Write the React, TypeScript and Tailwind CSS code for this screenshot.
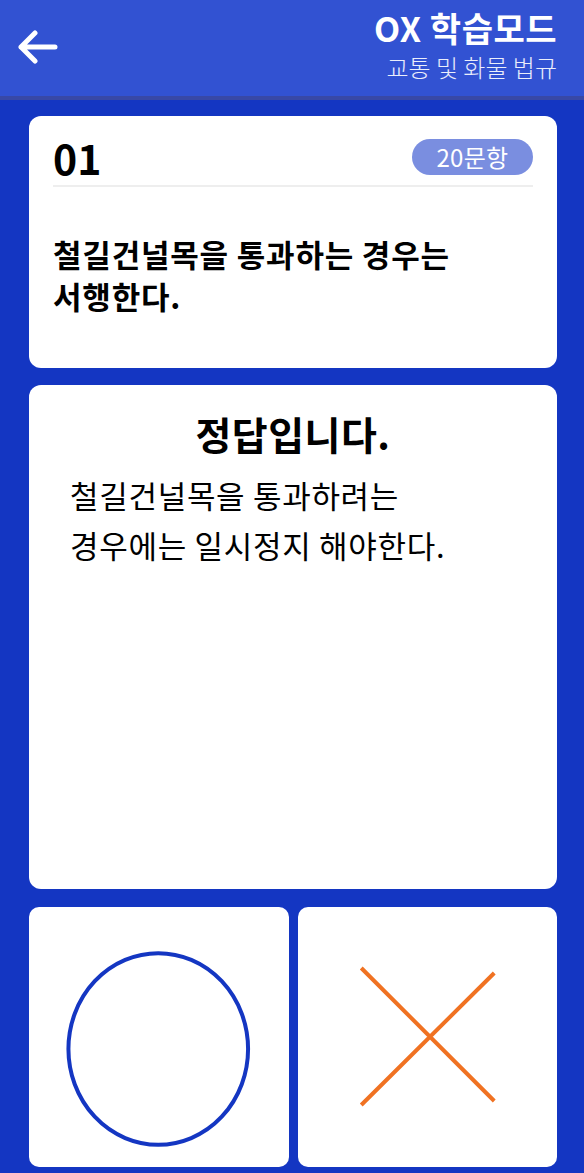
const font = { fontFamily: '"Noto Sans CJK KR", "Noto Sans", sans-serif' };

const BackArrow = () => (
  <svg width="40" height="34" viewBox="0 0 40 34" fill="none">
    <path
      d="M3 17 H37 M17 3 L3 17 L17 31"
      stroke="white"
      strokeWidth="5"
      strokeLinecap="round"
      strokeLinejoin="round"
    />
  </svg>
);

const Header = () => (
  <header className="h-[100px] bg-[#3252d2] border-b-[4px] border-[#3848a6] flex items-start justify-between pl-[18px] pr-[27px]">
    <div className="mt-[30px]">
      <BackArrow />
    </div>
    <div className="flex flex-col items-end pt-[10px] gap-[8px]">
      <h1 className="text-[34px] font-bold text-white leading-[36px] tracking-[0.5px]">OX 학습모드</h1>
      <p className="text-[24px] font-light text-white/90 leading-[26px]">교통 및 화물 법규</p>
    </div>
  </header>
);

const QuestionCard = () => (
  <section className="bg-white rounded-[12px] h-[252px] px-[24px] pt-[23px]">
    <div className="flex items-center justify-between h-[36px]">
      <span className="text-[41px] font-bold text-black leading-none">01</span>
      <span className="w-[121px] h-[36px] rounded-full bg-[#7a8ee0] text-white text-[24px] tracking-[0.3px] flex items-center justify-center">
        20문항
      </span>
    </div>
    <div className="h-[2px] bg-[#eeeeee] mt-[10px]" />
    <p className="mt-[46px] text-[31px] font-bold text-black leading-[42px] tracking-[0.8px]">
      철길건널목을 통과하는 경우는
      <br />
      서행한다.
    </p>
  </section>
);

const AnswerCard = () => (
  <section className="bg-white rounded-[12px] h-[504px] mt-[17px] pt-[23px]">
    <h2 className="text-[39px] font-bold text-black text-center leading-[50px] tracking-[0.5px]">정답입니다.</h2>
    <p className="pl-[41px] mt-[12px] text-[31px] text-black leading-[50px] tracking-[0.7px]">
      철길건널목을 통과하려는
      <br />
      경우에는 일시정지 해야한다.
    </p>
  </section>
);

const ChoiceO = () => (
  <button className="flex-1 bg-white rounded-[10px] h-[260px]">
    <svg className="w-full h-full" viewBox="0 0 260 260" fill="none">
      <ellipse cx="129.5" cy="142" rx="90" ry="96" stroke="#1436c2" strokeWidth="4" />
    </svg>
  </button>
);

const ChoiceX = () => (
  <button className="flex-1 bg-white rounded-[10px] h-[260px]">
    <svg className="w-full h-full" viewBox="0 0 259 260" fill="none">
      <path d="M63 61 L196 194 M196 66 L63 198" stroke="#f07222" strokeWidth="4" />
    </svg>
  </button>
);

export default function App() {
  return (
    <div className="w-[584px] h-[1173px] bg-[#1436c2] overflow-hidden" style={font}>
      <Header />
      <main className="pl-[29px] pr-[27px] pt-[16px]">
        <QuestionCard />
        <AnswerCard />
        <div className="flex gap-[9px] mt-[18px]">
          <ChoiceO />
          <ChoiceX />
        </div>
      </main>
    </div>
  );
}
